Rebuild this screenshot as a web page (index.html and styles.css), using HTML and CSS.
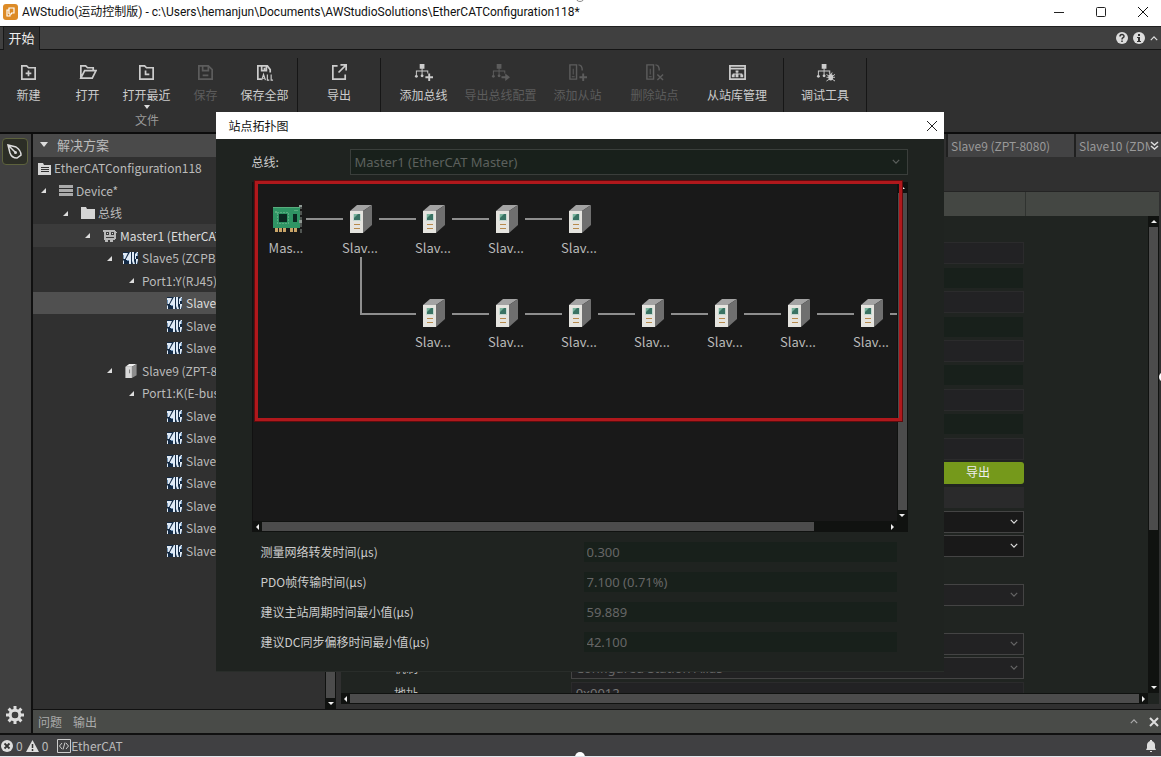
FILE: index.html
```html
<!DOCTYPE html>
<html lang="zh-CN">
<head>
<meta charset="utf-8">
<title>AWStudio</title>
<link rel="stylesheet" href="styles.css">
</head>
<body>
<svg class="defs" aria-hidden="true">
  <symbol id="tree" viewBox="0 0 20 20"><path d="M6 1h5v5H6zM8 5h1v9H8zM2 8h13v1H2zM2 8h1v6H2zM14 8h1v3h-1z"/><circle cx="2.500" cy="14" r="1.500"/><circle cx="8.500" cy="13.500" r="1.500"/></symbol>
  <symbol id="zlg" viewBox="0 0 16 14"><path fill="#132a45" d="M0 1h15v12H0z"/><path fill="#dfeaf6" d="M0 2h5L2 8H1L0 7zM0 10l1-1v4H0zM7 1h1v12H6V9H3v-1zM9 1h2v9l1 3h-2L9 10zM12 3l2-2h1v4h-2v3h-1zM13 8h2v1l-1 4h-1z"/><path fill="#6f93b8" d="M4 9h2v1H4zM14 2h1v3h-1zM0 4h1v3H0z"/></symbol>
  <symbol id="box" viewBox="0 0 12 15"><path fill="#d8d8d8" d="M0 3h7v12H0z"/><path fill="#f0f0f0" d="M0 3l4-3h8L7 3z"/><path fill="#8c8c8c" d="M7 3l5-3v12l-5 3z"/><path fill="#777" d="M4 6h1v4H4z"/></symbol>
  <symbol id="server" viewBox="0 0 24 30"><path fill="#a3a3a3" d="M1 7l7-6h15l-9 6z"/><path fill="#e5e4df" d="M1 7h13v22H1z"/><path fill="#6f6f6f" d="M14 7l9-6v20l-9 8z"/><path fill="#c4d8d0" d="M4 10h8v7H4z"/><path fill="#397263" d="M5 10h6v6H5z"/><path fill="#79b39c" d="M5 10h4l-4 4z"/><path fill="#b78a4c" d="M5 20h6v1H5zM5 24h6v1H5z"/></symbol>
  <symbol id="board" viewBox="0 0 31 30"><path fill="#2f9464" d="M1 3h27v21H1z"/><path fill="#58ad7d" d="M1 3h27v1H1zM3 7h2v2H3zM22 6h4v1h-4z"/><path fill="#0b2721" d="M7 10h8v8H7zM21 10h4v8h-4z"/><path fill="none" stroke="#82c49f" stroke-dasharray="1 2" d="M5.500 8.500h11v11h-11z"/><path fill="#c9a468" d="M3 24h3v4H3zM7 24h3v4H7zM11 24h3v4h-3zM18 24h3v4h-3zM22 24h3v4h-3z"/><path fill="none" stroke="#89948d" stroke-dasharray="4 2" d="M29 1v28"/><path fill="#8f9994" d="M27 1h3v2h-3zM27 16h3v3h-3z"/></symbol>
  <symbol id="chev" viewBox="0 0 10 6"><path fill="none" stroke="currentColor" stroke-width="1.500" d="M1 1l4 4 4-4"/></symbol>
  <symbol id="close" viewBox="0 0 12 12"><path fill="none" stroke="currentColor" stroke-width="1" d="M1 1l10 10M11 1L1 11"/></symbol>
  <symbol id="slave" viewBox="0 0 20 20"><path fill="none" stroke="currentColor" stroke-width="1.500" d="M2 2h7v15H2zM11 2c3 0 4 2 4 6"/><path d="M5 6h1v6H5zM4 14h3v1H4z"/></symbol>
</svg>
<div class="app">
  <header class="titlebar">
    <svg class="logo" viewBox="0 0 15 16"><rect width="15" height="16" rx="3" fill="#dd8b27"/><path fill="none" stroke="#fff" stroke-width="1.200" d="M6 6H4v6h3v-2h2M6 10V4h5v5H8"/></svg>
    <span class="title">AWStudio(运动控制版) - c:\Users\hemanjun\Documents\AWStudioSolutions\EtherCATConfiguration118*</span>
    <button class="wbtn" aria-label="最小化"><svg width="12" height="12"><path stroke="#222" d="M1 6.500h10"/></svg></button>
    <button class="wbtn" aria-label="最大化"><svg width="12" height="12"><rect x="1.500" y="1.500" width="9" height="9" rx="1" fill="none" stroke="#222"/></svg></button>
    <button class="wbtn" aria-label="关闭"><svg width="12" height="12"><use href="#close"/></svg></button>
  </header>
  <nav class="tabstrip">
    <button class="tab">开始</button>
    <span class="fill"></span>
    <button class="ibtn" aria-label="帮助"><svg width="12" height="12" viewBox="0 0 12 12"><circle cx="6" cy="6" r="6" fill="#ddd"/><path fill="none" stroke="#333" stroke-width="1.500" d="M4 4.500C4 2 8 2 8 4.300 8 6 6 5.500 6 7.500M6 8.500V10"/></svg></button>
    <button class="ibtn" aria-label="信息"><svg width="12" height="12" viewBox="0 0 12 12"><circle cx="6" cy="6" r="6" fill="#ddd"/><path fill="#333" d="M5 2h2v2H5zM4 5h3v4h1v1H4V9h1V6H4z"/></svg></button>
    <button class="ibtn" aria-label="折叠"><svg class="up" width="8" height="5"><use href="#chev"/></svg></button>
  </nav>
  <div class="ribbon">
    <section class="group file">
      <div class="tools">
        <button class="tool"><svg viewBox="0 0 20 20"><path fill="none" stroke="currentColor" stroke-width="1.800" d="M3 3h5l2 2h7v12H3zM10 8v6M7 11h6"/></svg>新建</button>
        <button class="tool"><svg viewBox="0 0 20 20"><path fill="none" stroke="currentColor" stroke-width="1.800" d="M3 16V3h5l2 2h6v3M3 16L7 8h12l-4 8z"/></svg>打开</button>
        <button class="tool"><svg viewBox="0 0 20 20"><path fill="none" stroke="currentColor" stroke-width="1.800" d="M3 3h5l2 2h7v12H3zM9 8v4h4"/></svg>打开最近<i class="down"></i></button>
        <button class="tool" disabled><svg viewBox="0 0 20 20"><path fill="none" stroke="currentColor" stroke-width="1.800" d="M3 3h10l4 4v10H3zM7 3v5h6V3M7 13h6"/></svg>保存</button>
        <button class="tool"><svg viewBox="0 0 20 20"><path fill="none" stroke="currentColor" stroke-width="1.800" d="M7 17H3V3h10l3 4v3M7 3v5h5V3M10 5v2"/><path fill="none" stroke="currentColor" stroke-width="1.200" d="M7 18l2-6 2 6M8 16h2M13 12v6h2M17 12v6h2"/></svg>保存全部</button>
      </div>
      <h2 class="gname">文件</h2>
    </section>
    <section class="group export"><div class="tools">
      <button class="tool"><svg viewBox="0 0 20 20"><path fill="none" stroke="currentColor" stroke-width="1.800" d="M8 3H3v14h13v-5M11 2h6v6M17 2l-8 8"/></svg>导出</button>
    </div></section>
    <section class="group bus"><div class="tools">
      <button class="tool"><svg viewBox="0 0 20 20"><use href="#tree"/><path d="M15 11h2v3h3v2h-3v3h-2v-3h-3v-2h3z"/></svg>添加总线</button>
      <button class="tool" disabled><svg viewBox="0 0 20 20"><use href="#tree"/><path d="M11 14h4v-3l5 4-5 4v-3h-4z"/></svg>导出总线配置</button>
      <button class="tool" disabled><svg viewBox="0 0 20 20"><use href="#slave"/><path d="M15 11h2v3h3v2h-3v3h-2v-3h-3v-2h3z"/></svg>添加从站</button>
      <button class="tool" disabled><svg viewBox="0 0 20 20"><use href="#slave"/><path stroke="currentColor" stroke-width="1.500" d="M13 12l6 6M19 12l-6 6"/></svg>删除站点</button>
      <button class="tool wide"><svg viewBox="0 0 20 20"><path fill="none" stroke="currentColor" stroke-width="1.800" d="M2 3h16v14H2zM2 6h16"/><path d="M8 8h3v2H8zM9 10h1v3H9zM5 11h10v1H5zM4 12h3v3H4zM8 12h3v3H8zM13 12h3v3h-3z"/></svg>从站库管理</button>
    </div></section>
    <section class="group debug"><div class="tools">
      <button class="tool"><svg viewBox="0 0 20 20"><use href="#tree"/><ellipse cx="15.500" cy="15" rx="2.500" ry="3.500"/><path fill="none" stroke="currentColor" d="M11 12l3 2M20 12l-3 2M11 15h9M11 19l3-2M20 19l-3-2M14 10l1 2M17 10l-1 2"/></svg>调试工具</button>
    </div></section>
  </div>
  <div class="main">
    <aside class="activity">
      <button class="pen" aria-label="设计"><svg width="18" height="18" viewBox="0 0 18 18"><path fill="none" stroke="#ddd" stroke-width="1.500" d="M2 2l8 2c3 2 5 5 5 8l-4 3c-3 0-6-2-7-5zM2 2l7 7"/><circle cx="9.500" cy="9.500" r="1.500" fill="#ddd"/></svg></button>
      <span class="fill"></span>
      <button class="gear" aria-label="设置"><svg width="18" height="18" viewBox="0 0 18 18"><circle cx="9" cy="9" r="4.800" fill="none" stroke="#ddd" stroke-width="3"/><path stroke="#ddd" stroke-width="3" d="M9 0v4M9 14v4M0 9h4M14 9h4M2.600 2.600l3 3M12.400 12.400l3 3M15.400 2.600l-3 3M5.600 12.400l-3 3"/><circle cx="9" cy="9" r="3" fill="#404040"/></svg></button>
    </aside>
    <div class="work">
      <div class="panes">
        <div class="explorer">
          <h2 class="head"><i class="down"></i>解决方案</h2>
          <ul class="treelist">
            <li class="root"><span class="ic"><svg width="13" height="13" viewBox="0 0 13 13"><path fill="#d5d5d5" d="M0 1h5l1 2h7v10H0z"/><path stroke="#333" d="M3 5.500h8M3 7.500h8M3 9.500h8"/></svg></span>EtherCATConfiguration118</li>
            <li class="l1"><i class="ex"></i><span class="ic"><svg width="14" height="12"><path fill="#aaa" d="M0 0h14v3H0zM0 4h14v3H0zM0 8h14v3H0z"/></svg></span>Device*</li>
            <li class="l2"><i class="ex"></i><span class="ic"><svg width="14" height="12"><path fill="#d5d5d5" d="M0 0h5l1 2h8v10H0z"/></svg></span>总线</li>
            <li class="l3 strong"><i class="ex"></i><span class="ic"><svg width="14" height="12"><path fill="#b8b8b8" d="M1 0h11V1h1v8h-1v1H1zM0 0h1v2H0zM2 10h3v2H2zM7 10h3v2H7zM13 2h1v1h-1z"/><path fill="#3d3d3d" d="M3 2h3v3H3zM8 2h3v3H8zM3 7h8v1H3z"/><path fill="#ddd" d="M4 3h1v1H4zM9 3h1v1H9z"/></svg></span>Master1 (EtherCAT Master)</li>
            <li class="l4"><i class="ex"></i><span class="ic"><svg width="16" height="14"><use href="#zlg"/></svg></span>Slave5 (ZCPB-8008)</li>
            <li class="l5"><i class="ex near"></i>Port1:Y(RJ45)</li>
            <li class="l6 sel"><span class="ic"><svg width="16" height="14"><use href="#zlg"/></svg></span>Slave6</li>
            <li class="l6"><span class="ic"><svg width="16" height="14"><use href="#zlg"/></svg></span>Slave7</li>
            <li class="l6"><span class="ic"><svg width="16" height="14"><use href="#zlg"/></svg></span>Slave8</li>
            <li class="l4"><i class="ex"></i><span class="ic mid"><svg width="12" height="14"><use href="#box"/></svg></span>Slave9 (ZPT-8080)</li>
            <li class="l5"><i class="ex near"></i>Port1:K(E-bus)</li>
            <li class="l6"><span class="ic"><svg width="16" height="14"><use href="#zlg"/></svg></span>Slave10</li>
            <li class="l6"><span class="ic"><svg width="16" height="14"><use href="#zlg"/></svg></span>Slave11</li>
            <li class="l6"><span class="ic"><svg width="16" height="14"><use href="#zlg"/></svg></span>Slave12</li>
            <li class="l6"><span class="ic"><svg width="16" height="14"><use href="#zlg"/></svg></span>Slave13</li>
            <li class="l6"><span class="ic"><svg width="16" height="14"><use href="#zlg"/></svg></span>Slave14</li>
            <li class="l6"><span class="ic"><svg width="16" height="14"><use href="#zlg"/></svg></span>Slave15</li>
            <li class="l6"><span class="ic"><svg width="16" height="14"><use href="#zlg"/></svg></span>Slave16</li>
          </ul>
        </div>
        <div class="vbar"><i class="tri n"></i><span class="thumb"></span><i class="tri s"></i></div>
        <div class="editor">
          <div class="etabs"><span class="fill"></span><button class="etab">Slave9 (ZPT-8080)</button><button class="etab last">Slave10 (ZDM)</button><button class="more" aria-label="更多"><svg width="9" height="9" viewBox="0 0 9 9"><path fill="none" stroke="#ddd" stroke-width="1.500" d="M1 1l3.500 3L8 1M1 5l3.500 3L8 5"/></svg></button></div>
          <div class="sheet">
            <div class="thead"><span></span><span></span></div>
            <div class="sbody">
              <div class="rows">
                <div class="row"><label for="f1"></label><input id="f1" disabled></div>
                <div class="row"><label for="f2"></label><input id="f2" class="green" disabled></div>
                <div class="row"><label for="f3"></label><input id="f3" disabled></div>
                <div class="row"><label for="f4"></label><input id="f4" class="green" disabled></div>
                <div class="row"><label for="f5"></label><input id="f5" disabled></div>
                <div class="row"><label for="f6"></label><input id="f6" class="green" disabled></div>
                <div class="row"><label for="f7"></label><input id="f7" disabled></div>
                <div class="row"><label for="f8"></label><input id="f8" class="green" disabled></div>
                <div class="row"><label for="f9"></label><input id="f9" disabled></div>
                <div class="row"><span></span><div class="pair"><span></span><button class="go">导出</button></div></div>
                <div class="row"><span></span><span class="blank"></span></div>
                <div class="row"><label for="s1"></label><span class="pick on"><select id="s1"></select><svg width="8" height="5"><use href="#chev"/></svg></span></div>
                <div class="row"><label for="s2"></label><span class="pick on"><select id="s2"></select><svg width="8" height="5"><use href="#chev"/></svg></span></div>
                <div class="row"></div>
                <div class="row"><label for="s3"></label><span class="pick"><select id="s3" disabled></select><svg width="8" height="5"><use href="#chev"/></svg></span></div>
                <div class="row"></div>
                <div class="row"><label for="s4"></label><span class="pick"><select id="s4" disabled></select><svg width="8" height="5"><use href="#chev"/></svg></span></div>
                <div class="row"><label for="s5">机制</label><span class="pick"><select id="s5" disabled><option>Configured Station Alias</option></select><svg width="8" height="5"><use href="#chev"/></svg></span></div>
                <div class="row"><label for="f10">地址</label><input id="f10" value="0x0012" disabled></div>
              </div>
              <div class="vbar"><i class="tri n"></i><span class="thumb part"></span><span class="rest"></span><i class="tri s"></i></div>
            </div>
            <div class="hbar"><i class="tri w"></i><span class="thumb"></span><i class="tri e"></i></div>
          </div>
        </div>
      </div>
      <div class="output"><button>问题</button><button>输出</button><span class="fill"></span><svg class="up" width="8" height="5"><use href="#chev"/></svg><svg width="10" height="10" viewBox="0 0 10 10"><path stroke="#ddd" stroke-width="2" d="M1 1l8 8M9 1L1 9"/></svg></div>
    </div>
  </div>
  <footer class="status">
    <svg width="12" height="12" viewBox="0 0 12 12"><circle cx="6" cy="6" r="6" fill="#ddd"/><path stroke="#333" stroke-width="1.800" d="M3.500 3.500l5 5M8.500 3.500l-5 5"/></svg><span>0</span>
    <svg width="13" height="12" viewBox="0 0 13 12"><path fill="#ddd" d="M6.500 0L13 12H0z"/><path stroke="#333" stroke-width="1.500" d="M6.500 4v4M6.500 9v2"/></svg><span>0</span>
    <svg class="code" width="14" height="14" viewBox="0 0 14 14"><path fill="none" stroke="#ccc" d="M.5.5h13v13H.5zM5 4L2.500 7 5 10M9 4l2.500 3L9 10M8 3.500l-2 7"/></svg><span class="proto">EtherCAT</span>
    <span class="fill"></span>
    <svg width="10" height="12" viewBox="0 0 10 12"><path fill="#ddd" d="M4 0h2v1c2 1 3 2 3 4v3l1 2H0l1-2V5c0-2 1-3 3-4zM4 11h2v1H4z"/></svg>
  </footer>
  <i class="grip top"></i><i class="grip bottom"></i><i class="grip right"></i>

  <div class="overlay">
    <div class="dialog" role="dialog" aria-labelledby="dt">
      <div class="dtitle"><h1 id="dt">站点拓扑图</h1><button class="dclose" aria-label="关闭"><svg width="12" height="12"><use href="#close"/></svg></button></div>
      <div class="dbody">
        <div class="busrow"><label for="bus">总线:</label><span class="pick"><select id="bus" disabled><option>Master1 (EtherCAT Master)</option></select><svg width="8" height="5"><use href="#chev"/></svg></span></div>
        <div class="topo">
          <div class="canvasrow">
            <svg class="canvas" role="img" aria-label="拓扑">
              <g stroke="#8e8e8e" stroke-width="2" fill="none"><path d="M53 37h37M126 37h37M199 37h37M272 37h37M108 75v57h55M199 132h37M272 132h37M345 132h37M418 132h37M491 132h37M564 132h37M637 132h8"/></g>
              <use href="#board" x="19" y="22" width="31" height="30"/>
              <use href="#server" x="96" y="22" width="24" height="30"/><use href="#server" x="169" y="22" width="24" height="30"/><use href="#server" x="242" y="22" width="24" height="30"/><use href="#server" x="315" y="22" width="24" height="30"/>
              <use href="#server" x="169" y="116" width="24" height="30"/><use href="#server" x="242" y="116" width="24" height="30"/><use href="#server" x="315" y="116" width="24" height="30"/><use href="#server" x="388" y="116" width="24" height="30"/><use href="#server" x="461" y="116" width="24" height="30"/><use href="#server" x="534" y="116" width="24" height="30"/><use href="#server" x="607" y="116" width="24" height="30"/>
              <g class="names"><text x="33" y="71">Mas...</text><text x="107" y="71">Slav...</text><text x="180" y="71">Slav...</text><text x="253" y="71">Slav...</text><text x="326" y="71">Slav...</text><text x="180" y="165">Slav...</text><text x="253" y="165">Slav...</text><text x="326" y="165">Slav...</text><text x="399" y="165">Slav...</text><text x="472" y="165">Slav...</text><text x="545" y="165">Slav...</text><text x="618" y="165">Slav...</text></g>
            </svg>
            <div class="vbar"><i class="tri n"></i><span class="thumb"></span><i class="tri s"></i></div>
          </div>
          <div class="hbar"><i class="tri w"></i><span class="thumb part"></span><span class="rest"></span><i class="tri e"></i></div>
          <div class="mark"></div>
        </div>
        <div class="stats">
          <label for="m1">测量网络转发时间(µs)</label><input id="m1" value="0.300" disabled>
          <label for="m2">PDO帧传输时间(µs)</label><input id="m2" value="7.100 (0.71%)" disabled>
          <label for="m3">建议主站周期时间最小值(µs)</label><input id="m3" value="59.889" disabled>
          <label for="m4">建议DC同步偏移时间最小值(µs)</label><input id="m4" value="42.100" disabled>
        </div>
      </div>
    </div>
  </div>
</div>
</body>
</html>
```
FILE: styles.css
```css
* { box-sizing: border-box; }
body { margin: 0; font: 12px/16px "Noto Sans CJK SC", sans-serif; color: #bbb; background: #303030; }
button, input, select { font: inherit; color: inherit; margin: 0; padding: 0; border: 0; background: none; border-radius: 0; }
button { white-space: nowrap; }
select { appearance: none; }
h1, h2, ul { margin: 0; padding: 0; font: inherit; list-style: none; }
svg { flex: none; display: block; fill: currentColor; }
.defs { position: absolute; width: 0; height: 0; }
.fill { flex: 1; }
.up { transform: rotate(180deg); }
.app { position: relative; display: flex; flex-direction: column; height: 100vh; overflow: hidden; border-bottom: 1px solid #e4e8ee; }

.titlebar { display: flex; align-items: center; flex: none; height: 26px; background: #fff; color: #111; padding: 0 3px 2px; }
.logo { width: 15px; height: 16px; margin-right: 4px; }
.title { flex: 1; font-family: Roboto, "Noto Sans CJK SC", sans-serif; }
.wbtn { display: grid; place-items: center; width: 42px; height: 24px; }
.wbtn:last-child { margin-right: -6px; }

.tabstrip { display: flex; flex: none; align-items: center; height: 24px; background: #404040; border-top: 1px solid #202020; border-bottom: 1px solid #141414; }
.tab { height: 24px; width: 37px; margin-left: 3px; padding-bottom: 2px; background: #303030; border: 1px solid #181818; border-bottom: 0; color: #eee; font-size: 13px; }
.ibtn { display: grid; place-items: center; width: 17px; height: 22px; color: #ddd; }
.ibtn:last-child { width: 14px; }

.ribbon { display: flex; flex: none; height: 84px; background: #303030; border-bottom: 2px solid #0c0c0c; padding-top: 8px; }
.group { display: flex; flex-direction: column; border-right: 1px solid #161616; }
.tools { display: flex; }
.tool { position: relative; display: flex; flex-direction: column; align-items: center; gap: 5px; width: 59px; padding-top: 5px; color: #ccc; }
.tool:disabled { color: #5c5c5c; }
.tool svg { width: 19px; height: 19px; }
.file { width: 298px; }
.file .tools { margin-left: -1px; }
.export, .debug { width: 83px; }
.export .tool, .debug .tool { width: 82px; }
.bus { width: 403px; padding-left: 4px; }
.bus .tool { width: 77px; }
.bus .wide { width: 88px; }
.down { border: 4px solid transparent; border-top: 5px solid #ddd; border-bottom: 0; }
.tool .down { position: absolute; top: 47px; border-width: 4px 3px 0; }
.gname { margin: 9px 0 0 135px; color: #999; }

.main { display: flex; flex: 1; min-height: 0; background: #303030; }
.activity { display: flex; flex-direction: column; width: 33px; padding: 4px 2px 9px; background: #404040; border-right: 2px solid #101010; }
.pen { display: grid; place-items: center; width: 26px; height: 27px; border: 1px solid #5d623d; border-radius: 4px; background: #2c2e26; }
.gear { padding-left: 4px; width: 26px; }
.work { display: flex; flex: 1; flex-direction: column; min-width: 0; }
.panes { display: flex; flex: 1; min-height: 0; }

.explorer { width: 292px; overflow: hidden; white-space: nowrap; }
.head { display: flex; align-items: center; gap: 9px; height: 23px; padding: 0 0 2px 7px; background: #4a4a4a; font-size: 13px; }
.treelist li { display: flex; align-items: center; height: 22px; }
.treelist li:nth-child(even) { height: 23px; }
.treelist .root { padding-left: 2px; }
.treelist .l1 { padding-left: 8px; }
.treelist .l2 { padding-left: 30px; }
.treelist .l3 { padding-left: 52px; }
.treelist .l4 { padding-left: 74px; }
.treelist .l5 { padding-left: 96px; }
.treelist .l6 { padding-left: 134px; }
.treelist .strong { background: #3b3b3b; color: #ddd; }
.treelist .sel { background: #505050; color: #ddd; }
.ic { display: flex; justify-content: flex-end; width: 16px; margin-right: 3px; }
.ic.mid { justify-content: center; }
.ex { width: 16px; flex: none; }
.ex::before { content: ""; display: block; width: 0; border-left: 5px solid transparent; border-bottom: 5px solid #ddd; }
.near { width: 13px; }

.vbar { display: flex; flex-direction: column; align-items: center; flex: none; width: 11px; background: #101210; padding: 0 1px; }
.hbar { display: flex; align-items: center; flex: none; height: 11px; background: #101210; padding: 1px 0; }
.thumb { flex: 1; align-self: stretch; background: #4c4c4c; }
.tri { flex: none; margin: 4px 3px; border: 3px solid transparent; }
.n { border-top: 0; border-bottom-color: #eee; }
.s { border-bottom: 0; border-top-color: #eee; }
.w { border-left: 0; border-right-color: #eee; }
.e { border-right: 0; border-left-color: #eee; }

.editor { display: flex; flex: 1; flex-direction: column; min-width: 0; padding: 0 2px 5px 5px; }
.etabs { display: flex; flex: none; height: 23px; margin-right: -2px; }
.etab { width: 128px; padding: 0 0 0 3px; text-align: left; background: #434344; border-left: 2px solid #202020; color: #999; }
.etab.last { width: 76px; overflow: hidden; }
.more { width: 11px; background: #434344; }
.sheet { display: flex; flex: 1; flex-direction: column; min-height: 0; margin-top: 34px; border-top: 1px solid #242424; background: #202421; }
.thead { display: flex; flex: none; height: 24px; background: #444743; }
.thead span:first-child { flex: 1; border-right: 1px solid #303330; }
.thead span:last-child { width: 133px; }
.sbody { display: flex; flex: 1; min-height: 0; }
.rows { flex: 1; min-width: 0; overflow: hidden; padding: 25px 124px 0 3px; }
.row { display: grid; grid-template-columns: 1fr 2fr; align-items: center; height: 24px; }
.row:nth-child(5n+2), .row:nth-child(5n+4) { height: 25px; }
.row label { padding-left: 50px; color: #bbb; }
.row input { height: 22px; min-width: 0; width: 100%; background: #222224; border: 1px solid #2b2b2c; padding-left: 4px; color: #777; font: 13px "Noto Sans", sans-serif; }
.row .green { background: #18201b; border-color: #202421; }
.pair { display: flex; }
.pair span { flex: 1; }
.go { width: 92px; height: 22px; margin-left: auto; padding-bottom: 2px; background: #75991b; color: #eee; border-radius: 3px; }
.blank { height: 21px; background: #2a2a2b; }
.pick { position: relative; display: flex; height: 22px; color: #666; }
.pick select { width: 100%; border: 1px solid #444; background: #222223; padding: 0 4px; opacity: 1; color: inherit; font: 13px "Noto Sans", sans-serif; }
.pick svg { position: absolute; right: 6px; top: 8px; }
.pick.on { color: #ddd; }
.pick.on select { background: #191919; }
.sbody .part { flex: 2; }
.sbody .rest { flex: 1; }
.sheet .hbar { margin-right: 11px; }

.output { display: flex; align-items: center; flex: none; gap: 11px; height: 24px; padding: 0 2px 0 5px; background: #494b48; border-top: 1px solid #111; color: #aaa; }
.status { display: flex; align-items: center; flex: none; gap: 3px; height: 23px; padding: 1px 5px 0 1px; border-top: 2px solid #101010; background: #404042; }
.code { margin-left: 6px; }
.proto { margin-left: -3px; }
.grip { position: absolute; width: 10px; height: 10px; border-radius: 5px; background: #fff; }
.grip.top { left: 50%; top: -8px; margin-left: -6px; border: 1px solid #888; }
.grip.bottom { left: 50%; bottom: -6px; margin-left: -6px; }
.grip.right { right: -8px; top: 50%; margin-top: -6px; }

.overlay { position: absolute; inset: 112px 2px 0 0; display: flex; justify-content: center; align-items: flex-start; pointer-events: none; }
.dialog { width: 728px; max-width: 100%; background: #1f2320; border-bottom: 1px solid #292d2a; pointer-events: auto; }
.dtitle { display: flex; align-items: center; justify-content: space-between; height: 27px; padding: 0 6px 0 13px; background: #fff; color: #111; }
.dclose { display: grid; place-items: center; color: #222; }
.dbody { padding: 10px 36px 19px; color: #ccc; }
.busrow { display: flex; align-items: center; }
.busrow label { width: 98px; }
.busrow .pick { flex: 1; height: 26px; color: #5c605d; }
.busrow select { background: #18201b; border-color: #3a3e3b; }
.busrow .pick svg { top: 10px; right: 8px; }
.topo { position: relative; margin-top: 7px; border-left: 1px solid #111; }
.canvasrow { display: flex; height: 339px; }
.canvas { flex: 1; min-width: 0; height: 339px; background: #191919; overflow: hidden; }
.names { fill: #bbb; font-size: 13px; text-anchor: middle; }
.topo .hbar { padding-right: 11px; }
.topo .hbar .part { flex: 15; }
.topo .hbar .rest { flex: 2; }
.mark { position: absolute; left: 2px; right: 6px; top: -1px; height: 240px; border: 3px solid #b0181c; outline: 1px solid #5d0c0e; }
.stats { display: grid; grid-template-columns: 323px 1fr; row-gap: 10px; align-items: center; padding: 10px 11px 0 9px; }
.stats input { width: 100%; height: 20px; padding-left: 3px; background: #18201b; color: #666; font: 13px "Noto Sans", sans-serif; }
```
